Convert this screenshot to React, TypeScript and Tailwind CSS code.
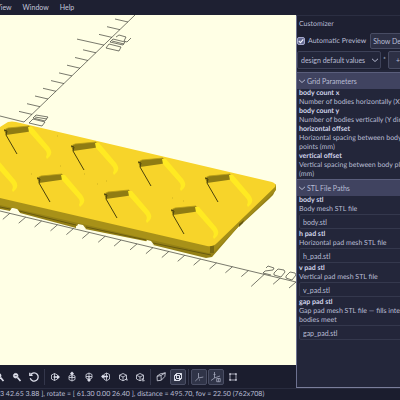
import { useState } from "react";
import type { ReactNode } from "react";

const POCKETS = [
  [4, 130],
  [71, 146],
  [138, 162],
  [205, 178],
  [-30, 163],
  [37, 178],
  [104, 194],
  [171, 210],
];

const X_TICKS = Array.from({ length: 19 }, (_, i) => 296 - i * 15.9);

const Y_TICKS = Array.from({ length: 13 }, (_, i) => ({
  x: 128 - i * 8,
  y: 22 + i * 7.7,
  long: i === 3,
}));

const FILES = [
  { name: "body stl", text: ["Body mesh STL file"], value: "body.stl" },
  { name: "h pad stl", text: ["Horizontal pad mesh STL file"], value: "h_pad.stl" },
  { name: "v pad stl", text: ["Vertical pad mesh STL file"], value: "v_pad.stl" },
  {
    name: "gap pad stl",
    text: ["Gap pad mesh STL file — fills inte", "bodies meet"],
    value: "gap_pad.stl",
  },
];

const GRID_PARAMS = [
  { name: "body count x", text: ["Number of bodies horizontally (X"] },
  { name: "body count y", text: ["Number of bodies vertically (Y dir"] },
  { name: "horizontal offset", text: ["Horizontal spacing between body", "points (mm)"] },
  { name: "vertical offset", text: ["Vertical spacing between body pla", "(mm)"] },
];

function Pocket({ x, y }: { x: number; y: number }) {
  return (
    <g transform={`translate(${x} ${y})`}>
      <path d="M0 0 4-2 25-4 28 1 23 2 2 5Z" fill="#8f7c13" />
      <path d="M0 0 4-2 25-4" stroke="#b89d18" strokeWidth="0.8" fill="none" />
      <path d="M0 0 3 1 2 5 13 24" stroke="#4c420b" strokeWidth="1" fill="none" />
      <path
        d="M24-3 28-3 45 17Q49 22 46 26L43 29 42 27Q44 23 41 20L25 2Z"
        fill="#ffea22"
      />
    </g>
  );
}

function Viewport() {
  return (
    <svg
      className="block min-h-0 w-full flex-1 bg-[#ffffe5]"
      viewBox="0 15 296 350"
      preserveAspectRatio="xMinYMin slice"
      role="img"
      aria-label="3D view"
    >
      {/* axes */}
      <g stroke="#3f3f38" strokeWidth="0.7" fill="none">
        <path d="M135 15 24 122M0 116 24 122M0 211 296 282" />
        {Y_TICKS.map((t) => (
          <path key={t.x} d={t.long ? `M${t.x} ${t.y}l-27-6` : `M${t.x} ${t.y}l-13-3`} />
        ))}
        {X_TICKS.map((x, i) => {
          const y = 211 + x * 0.24;
          return <path key={x} d={i === 2 ? `M${x} ${y}l-13 12` : `M${x} ${y}l-7 6`} />;
        })}
        {/* 200 on the y axis */}
        <path d="M116 37 119 35 126 37 124 41 127 42 131 38M113 39 125 42 123 45 110 42ZM109 44 121 47 119 51 106 48ZM112 41 124 44" />
        {/* 100 on the y axis */}
        <path d="M36 115 48 117 45 121 33 118ZM33 119 45 122 42 126 29 123ZM35 117 47 119" />
        {/* 200 on the x axis */}
        <path d="M266 268 268 266 274 268 273 270 265 271 263 273 271 275M278 269 284 270 285 272 281 277 274 275 274 273ZM290 272 295 273 296 275 292 280 286 278 286 276Z" />
      </g>

      {/* lower layer and right side */}
      <path
        d="M0 203 210 250 276 189 273 195 269 199 244 222 239 226 212 257 206 258 153 245 150 242 85 229 82 225 76 226 76 228 20 213 17 209 12 208 10 211 0 209Z"
        fill="#948015"
      />
      <path d="M0 207 10 209M19 211 76 225M86 227 146 240M153 243 211 255" stroke="#5d500d" strokeWidth="0.8" fill="none" />
      <path d="M0 197 208 245 213 245 213 252 208 253 0 205Z" fill="#a89118" />
      <path d="M213 245 276 184 276 190 270 196 242 223 213 253Z" fill="#a38d17" />
      <path d="M210 245h4v8h-4z" fill="#796911" />
      <path d="M239 224 244 220 243 223 239 227Z" fill="#655710" />
      {/* gaps between the pads */}
      <path d="M10 211 12 208 17 209 20 213ZM76 229 78 224 83 225 86 229ZM145 244 147 240 151 241 154 245Z" fill="#ffffe5" />

      {/* top face */}
      <path
        d="M0 127 8 122Q12 121 16 122L272 182Q277 184 275 187L217 243Q213 247 207 246L0 198Z"
        fill="#f7d42a"
      />
      {POCKETS.map(([x, y]) => (
        <Pocket key={`${x}-${y}`} x={x} y={y} />
      ))}
      <path
        d="M57 136h1M106 181h1M84 174h1M183 201h1M172 198h1M60 166h1M97 184h1M31 174h1"
        stroke="#b69b1c"
        strokeWidth="0.6"
      />
    </svg>
  );
}

const Cube = () => <path d="M6 2.5 9.5 4.2V8L6 9.8 2.5 8V4.2ZM2.5 4.2 6 6 9.5 4.2M6 6v3.8" />;

const VIEW_TOOLS: { label: string; active?: boolean; divide?: boolean; icon: ReactNode }[] = [
  {
    label: "Zoom In",
    icon: (
      <>
        <circle cx="4.7" cy="4.7" r="2.3" fill="#e4e5f0" />
        <path d="M6.5 6.5 9.5 10" strokeWidth="1.7" />
      </>
    ),
  },
  {
    label: "Zoom Out",
    icon: (
      <>
        <circle cx="4.7" cy="4.7" r="2.3" fill="#e4e5f0" />
        <path d="M6.5 6.5 9.5 10" strokeWidth="1.7" />
        <path d="M3.6 4.7h2.2" stroke="#1d1f30" />
      </>
    ),
  },
  {
    label: "Reset View",
    icon: <path d="M2.8 3.5A4.1 4.1 0 1 1 2.2 7.3M1.8 1.8v2.6h2.8" strokeWidth="1.3" />,
  },
  {
    label: "Right",
    divide: true,
    icon: (
      <>
        <path d="M5.5 2.5 8.5 4v4L5.5 9.5 2.5 8V4ZM5.5 2.5v7" />
        <path d="M4.5 6H10M8.5 4.5 10 6 8.5 7.5" strokeWidth="1.3" />
      </>
    ),
  },
  {
    label: "Top",
    icon: (
      <>
        <path d="M6 3.5 9 5v3.5L6 10 3 8.5V5ZM3 6.5h6M6 6v4" />
        <path d="M6 6V1.5M4.5 3 6 1.5 7.5 3" strokeWidth="1.3" />
      </>
    ),
  },
  {
    label: "Bottom",
    icon: (
      <>
        <path d="M6 2 9 3.5V7L6 8.5 3 7V3.5ZM3 5.5h6M6 2v4" />
        <path d="M6 5.5V10M4.5 8.5 6 10 7.5 8.5" strokeWidth="1.3" />
      </>
    ),
  },
  {
    label: "Left",
    icon: (
      <>
        <path d="M6.5 2 9.5 3.5V8L6.5 9.8 4 8.2V3.5ZM6.5 2v7.5" />
        <path d="M8 5.5H2M3.5 4 2 5.5 3.5 7" strokeWidth="1.3" />
      </>
    ),
  },
  {
    label: "Front",
    icon: (
      <>
        <Cube />
        <path d="M8 8.2 10.3 9.2 9.3 6.8" />
      </>
    ),
  },
  {
    label: "Back",
    icon: (
      <>
        <Cube />
        <path d="M7.8 7 10.3 9.8H8" />
      </>
    ),
  },
  {
    label: "Perspective",
    divide: true,
    icon: <path d="M2 5.3 6 4.5 6.3 9.2 2.3 9.8ZM2 5.3 5 3 10.3 1.8 6 4.5M10.3 1.8 9.8 5.5 6.3 9.2" />,
  },
  {
    label: "Orthogonal",
    active: true,
    icon: (
      <path
        d="M2.5 4.5h5v5h-5ZM4.5 2.5h5v5h-5ZM2.5 4.5l2-2M7.5 4.5l2-2M7.5 9.5l2-2M2.5 9.5l2-2"
        strokeWidth="1"
      />
    ),
  },
  {
    label: "Show Axes",
    active: true,
    divide: true,
    icon: <path d="M5.5 2v5M5.5 7 10.3 6M5.5 7 2.3 10M6 9h1" stroke="#a5a8bd" strokeWidth="0.8" />,
  },
  {
    label: "Show Scale Markers",
    active: true,
    icon: (
      <path d="M4.5 1v6L10 5M4.5 7 1 9.5M3.5 3.5h2M6.7 7.5h3.5v3.2H6.7ZM8.4 7.5v3.2" stroke="#a5a8bd" strokeWidth="0.8" />
    ),
  },
  {
    label: "View All",
    icon: (
      <>
        <path d="M3 3h6v6H3Z" strokeWidth="0.7" />
        <path d="M2.3 3h1.4M8.3 3h1.4M2.3 9h1.4M8.3 9h1.4" strokeWidth="1.4" />
      </>
    ),
  },
];

function Toolbar() {
  return (
    <div className="flex h-[23px] shrink-0 items-center overflow-hidden bg-[#1b1d2e]">
      <div className="-ml-2 flex shrink-0 items-center gap-px">
        {VIEW_TOOLS.map((tool) => (
          <div key={tool.label} className="flex items-center gap-px">
            {tool.divide && <span className="mx-px h-4 w-px bg-[#34374b]" />}
            <button
              type="button"
              aria-label={tool.label}
              className={
                tool.active
                  ? "flex size-4 items-center justify-center rounded-xs border border-[#4a4e64] bg-[#303448]"
                  : "flex size-4 items-center justify-center"
              }
            >
              <svg
                className="size-3 shrink-0"
                viewBox="0 0 12 12"
                fill="none"
                stroke="#dcdeea"
                strokeWidth="0.8"
              >
                {tool.icon}
              </svg>
            </button>
          </div>
        ))}
      </div>
    </div>
  );
}

function Chevron() {
  return (
    <svg className="size-2 shrink-0" viewBox="0 0 8 8" fill="none" stroke="#b4b8ce">
      <path d="M1 2.8 4 5.5 7 2.8" />
    </svg>
  );
}

function GroupHeader({ title }: { title: string }) {
  return (
    <button
      type="button"
      className="flex h-[17px] w-full items-center gap-px border-t border-[#5a5e7c] bg-[#404360] pl-px text-left text-[#b9bdd4]"
    >
      <Chevron />
      {title}
    </button>
  );
}

function Description({ name, text }: { name: string; text: string[] }) {
  return (
    <>
      <span className="block font-bold text-[#d3d7ec]">{name}</span>
      {text.map((line) => (
        <span key={line} className="block">
          {line}
        </span>
      ))}
    </>
  );
}

function Customizer() {
  const [auto, setAuto] = useState(true);

  return (
    <aside className="flex w-26 shrink-0 flex-col overflow-hidden border-t border-b border-l border-t-[#2b2e42] border-b-[#7a7e9b] border-l-[#6d7190] bg-[#23263a] whitespace-nowrap">
      <div className="flex h-4 shrink-0 items-center bg-[#1e2032] pl-0.5">Customizer</div>

      <div className="flex h-[18px] shrink-0 items-center bg-[#1e2032]">
        <label className="flex items-center gap-[3px]">
          <span className="relative flex size-2">
            <input
              type="checkbox"
              checked={auto}
              onChange={(e) => setAuto(e.target.checked)}
              className="size-2 appearance-none rounded-xs border border-[#a4a8cb] bg-[#656a92]"
            />
            {auto && (
              <svg
                className="pointer-events-none absolute inset-0 size-2"
                viewBox="0 0 8 8"
                fill="none"
                stroke="#f1f2fa"
                strokeWidth="1.2"
              >
                <path d="M1.8 4 3.5 5.7 6.3 2.3" />
              </svg>
            )}
          </span>
          Automatic Preview
        </label>
        <button
          type="button"
          className="ml-1 h-4 shrink-0 rounded-xs border border-[#484c63] bg-[#2d3045] px-0.5"
        >
          Show Det
        </button>
      </div>

      <div className="flex h-5 shrink-0 items-center bg-[#1e2032]">
        <div className="relative flex shrink-0 items-center">
          <select
            aria-label="Preset"
            className="h-[18px] w-21 appearance-none rounded-xs border border-[#3d4158] bg-[#23263a] pl-[3px]"
          >
            <option>design default values</option>
          </select>
          <span className="pointer-events-none absolute right-0.5">
            <Chevron />
          </span>
        </div>
        <span className="px-0.5">*</span>
        <button
          type="button"
          aria-label="Add preset"
          className="h-[18px] w-5 shrink-0 rounded-xs border border-[#484c63] bg-[#2d3045]"
        >
          +
        </button>
      </div>

      <div className="mt-0.5 flex flex-col">
        <GroupHeader title="Grid Parameters" />
        <div className="pl-0.5">
          {GRID_PARAMS.map((p) => (
            <Description key={p.name} {...p} />
          ))}
        </div>

        <GroupHeader title="STL File Paths" />
        <div className="flex flex-col gap-px pl-0.5">
          {FILES.map((f) => (
            <label key={f.name} className="block">
              <Description name={f.name} text={f.text} />
              <input
                type="text"
                defaultValue={f.value}
                className="block h-[15px] w-28 rounded-xs border border-[#34384d] bg-[#23263a] px-[3px]"
              />
            </label>
          ))}
        </div>
      </div>
    </aside>
  );
}

export default function App() {
  return (
    <div className="flex h-screen w-full flex-col overflow-hidden bg-[#1b1d2e] font-[Lato,'Noto_Sans',sans-serif] text-[7px] leading-[9px] text-[#b9bdd4] [text-rendering:geometricPrecision]">
      <nav className="flex h-[15px] shrink-0 items-center gap-[11px] bg-[#1e2032] text-[#c5c8dc]">
        <button type="button" className="-ml-1">
          View
        </button>
        <button type="button">Window</button>
        <button type="button">Help</button>
      </nav>

      <div className="flex min-h-0 flex-1">
        <main className="flex min-w-0 flex-1 flex-col">
          <Viewport />
          <Toolbar />
        </main>
        <Customizer />
      </div>

      <footer className="flex h-3 shrink-0 items-center border-t border-[#292c3f] whitespace-nowrap">
        3 42.65 3.88 ], rotate = [ 61.30 0.00 26.40 ], distance = 495.70, fov = 22.50 (762x708)
      </footer>
    </div>
  );
}
